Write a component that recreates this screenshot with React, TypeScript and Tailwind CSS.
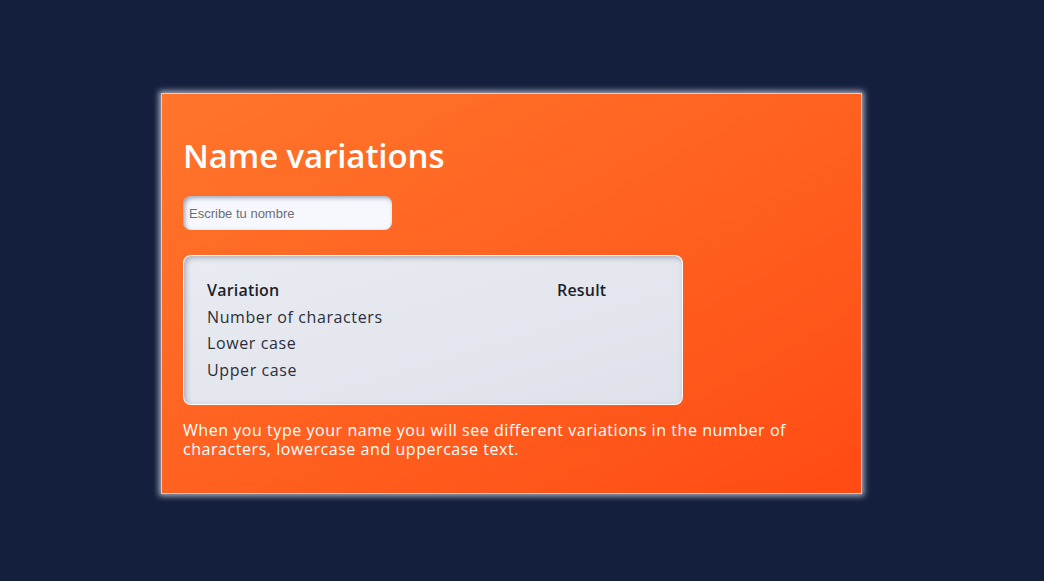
const rows = ["Number of characters", "Lower case", "Upper case"];

export default function App() {
  return (
    <div className="min-h-screen w-full bg-[#141f3e] pt-[93px] pl-[161px] font-['Open_Sans',sans-serif]">
      <div className="w-[701px] h-[401px] border border-[#f4c9b0] bg-gradient-to-br from-[#ff752b] to-[#ff4a14] shadow-[0_0_6px_2px_rgba(200,205,220,0.85)] px-[21px] pt-[38px]">
        <h1 className="text-[33px] font-semibold text-white leading-[48px] tracking-[-0.1px]">Name variations</h1>
        <input
          placeholder="Escribe tu nombre"
          className="mt-[16px] w-[209px] h-[34px] rounded-[8px] bg-[#f6f8fe] px-[6px] text-[13px] font-['Liberation_Sans',sans-serif] text-gray-700 placeholder:text-[#6b6e78] shadow-[inset_2px_2px_4px_rgba(90,95,120,0.55)] outline-none"
        />
        <div className="mt-[25px] w-[500px] h-[150px] rounded-[8px] border border-white/80 bg-gradient-to-br from-[#e8ebf1] to-[#dfe2ea] shadow-[inset_2px_2px_5px_rgba(110,115,135,0.5)] px-[23px] pt-[21px]">
          <div className="grid grid-cols-[350px_1fr] text-[16px] text-[#1c1f2a] leading-[26.5px] tracking-[0.6px]">
            <div className="font-semibold tracking-[0.2px]">Variation</div>
            <div className="font-semibold tracking-[0.2px]">Result</div>
            {rows.map((r) => (
              <>
                <div key={r} className="text-[#2b2e3a]">{r}</div>
                <div></div>
              </>
            ))}
          </div>
        </div>
        <p className="mt-[16px] w-[660px] text-[16px] leading-[19px] text-white tracking-[0.55px]">
          When you type your name you will see different variations in the number of characters, lowercase and uppercase text.
        </p>
      </div>
    </div>
  );
}
